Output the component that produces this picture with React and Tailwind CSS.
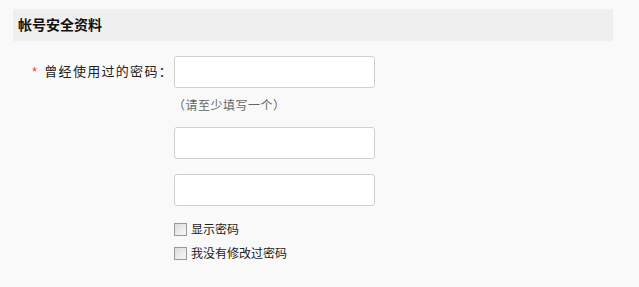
import React from 'react';

const font = { fontFamily: '"Liberation Sans", "Noto Sans CJK SC", sans-serif' };

const Field = () => (
  <input
    type="password"
    className="block w-[201px] h-[32px] bg-white border border-[#cfcfcf] rounded-[3px] outline-none"
  />
);

const Check = ({ label }) => (
  <label className="flex items-center h-[13px] text-[12px] text-[#222]">
    <span className="w-[13px] h-[13px] border border-[#999] bg-gradient-to-br from-[#dcdcdc] to-[#f8f8f8] mr-[4px]"></span>
    {label}
  </label>
);

export default function App() {
  return (
    <div className="w-[639px] h-[287px] bg-[#f9f9f9] pt-[9px] pl-[13px]" style={font}>
      {/* 标题栏 */}
      <div className="w-[600px] h-[32px] bg-[#efefef] flex items-center pl-[5px]">
        <h2 className="text-[14px] font-bold text-[#111]">帐号安全资料</h2>
      </div>

      <div className="flex mt-[15px]">
        <div className="w-[161px] h-[32px] flex items-center justify-end pr-[1px] text-[13px] tracking-[1.3px] text-[#222]">
          <span className="text-[#e33] mr-[6px] text-[12px]">*</span>
          曾经使用过的密码：
        </div>
        <div className="flex flex-col">
          <Field />
          <p className="text-[12px] tracking-[0.5px] text-[#666] mt-[10px] h-[16px] leading-[16px] -ml-[1px]">（请至少填写一个）</p>
          <div className="mt-[13px]"><Field /></div>
          <div className="mt-[15px]"><Field /></div>
          <div className="flex flex-col gap-[11px] mt-[17px]">
            <Check label="显示密码" />
            <Check label="我没有修改过密码" />
          </div>
        </div>
      </div>
    </div>
  );
}
